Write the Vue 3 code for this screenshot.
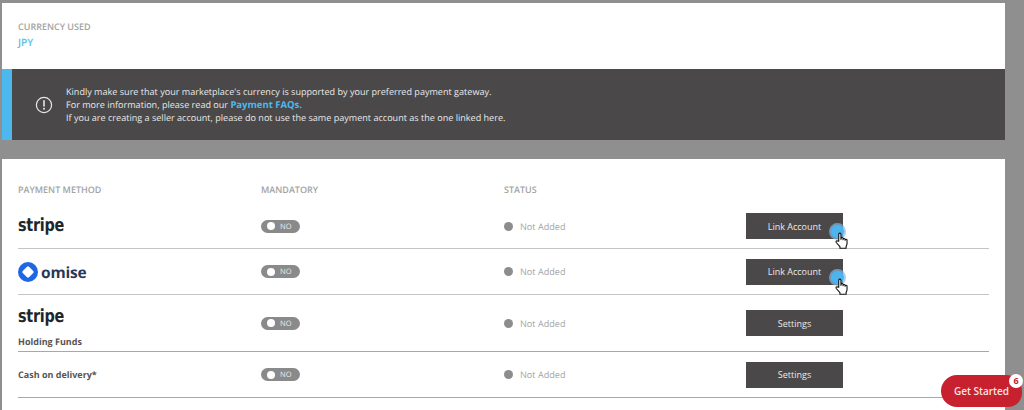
<script setup>
const rows = [
  { id: 1, kind: 'stripe', action: 'Link Account', cursor: true },
  { id: 2, kind: 'omise', action: 'Link Account', cursor: true },
  { id: 3, kind: 'holding', action: 'Settings', cursor: false },
  { id: 4, kind: 'cash', action: 'Settings', cursor: false },
]
</script>

<template>
  <div class="page">
    <section class="card currency">
      <div class="label">CURRENCY USED</div>
      <div class="value">JPY</div>
    </section>
    <section class="alert">
      <svg class="alert-icon" width="18" height="18" viewBox="0 0 18 18">
        <circle cx="9" cy="9" r="7.6" fill="none" stroke="#e8e8e8" stroke-width="1.2" />
        <path d="M9 4.8v5.2" stroke="#e8e8e8" stroke-width="1.6" stroke-linecap="round" />
        <circle cx="9" cy="12.8" r="1" fill="#e8e8e8" />
      </svg>
      <div class="alert-text">
        <div>Kindly make sure that your marketplace's currency is supported by your preferred payment gateway.</div>
        <div>For more information, please read our <a class="faq">Payment FAQs.</a></div>
        <div>If you are creating a seller account, please do not use the same payment account as the one linked here.</div>
      </div>
    </section>
    <section class="card methods">
      <div class="grid head">
        <div>PAYMENT METHOD</div>
        <div>MANDATORY</div>
        <div>STATUS</div>
        <div></div>
      </div>
      <div v-for="r in rows" :key="r.id" class="grid row" :class="'row-' + r.kind">
        <div class="method">
          <span v-if="r.kind === 'stripe' || r.kind === 'holding'" class="stripe">stripe</span>
          <span v-if="r.kind === 'holding'" class="sub">Holding Funds</span>
          <span v-if="r.kind === 'cash'" class="sub">Cash on delivery*</span>
          <span v-if="r.kind === 'omise'" class="omise">
            <svg width="20" height="20" viewBox="0 0 20 20">
              <circle cx="10" cy="10" r="10" fill="#1f66e5" />
              <rect x="5.6" y="5.6" width="8.8" height="8.8" rx="1.4" transform="rotate(45 10 10)" fill="#fff" />
            </svg>
            <span class="omise-text">omise</span>
          </span>
        </div>
        <div>
          <span class="toggle"><i class="knob"></i><span class="no">NO</span></span>
        </div>
        <div class="status"><i class="dot"></i>Not Added</div>
        <div>
          <button class="action">
            {{ r.action }}
            <span v-if="r.cursor" class="pointer">
              <svg width="15" height="17.500" viewBox="0 0 16 19">
                <path d="M5 10V2.400a1.200 1.200 0 0 1 2.400 0V8l.1-1a1.100 1.100 0 0 1 2.200.2V8.400l.1-.7a1.100 1.100 0 0 1 2.100.3v1l.1-.3a1 1 0 0 1 2 .3v3.600c0 1.200-.4 2-1 3v2H6.300v-1.600L2.300 11.400c-.9-1.300.7-2.500 1.700-1.500z" fill="#fff" stroke="#111" stroke-width="1.200" stroke-linejoin="round" />
              </svg>
            </span>
          </button>
        </div>
      </div>
    </section>
    <button class="get-started">Get Started<span class="badge">6</span></button>
  </div>
</template>

<style scoped>
.page {
  position: relative;
  width: 1024px;
  height: 410px;
  overflow: hidden;
  box-sizing: border-box;
  padding: 3px 19px 0 2px;
  background: #8f8f8f;
  font-family: "Open Sans", "Liberation Sans", sans-serif;
  text-rendering: geometricPrecision;
}
.card { background: #fff; }
.currency {
  height: 66px;
  box-sizing: border-box;
  padding: 17px 16px 0;
}
.label {
  font-size: 9px;
  line-height: 13px;
  font-weight: 600;
  color: #a3a3a3;
}
.value {
  margin-top: 2px;
  font-size: 10px;
  line-height: 15px;
  font-weight: 600;
  color: #55bfe8;
}
.alert {
  height: 71px;
  box-sizing: border-box;
  display: flex;
  align-items: center;
  border-left: 10px solid #4db8ee;
  background: #4a4849;
  color: #e9e9e9;
}
.alert-icon { margin-left: 23px; flex: none; }
.alert-text {
  margin-left: 13px;
  font-size: 9.070px;
  line-height: 13px;
  white-space: nowrap;
}
.faq { font-size: 9.500px; font-weight: 700; color: #4db8ee; }
.methods {
  margin-top: 19px;
  height: 260px;
  box-sizing: border-box;
  padding: 24px 16px 0;
}
.grid {
  display: grid;
  grid-template-columns: 243px 243px 242px 243px;
  align-items: center;
}
.head {
  height: 14px;
  margin-bottom: 7px;
  font-size: 9px;
  line-height: 14px;
  font-weight: 600;
  color: #a3a3a3;
}
.row {
  border-bottom: 1px solid #c4c4c4;
  height: 45px;
  box-sizing: content-box;
}
.row-stripe { height: 44px; }
.row-holding { height: 56px; border-bottom-color: #a8a8a8; }
.row-cash { height: 45px; border-bottom-color: #a8a8a8; }
.method { display: flex; flex-direction: column; align-items: flex-start; }
.stripe {
  display: inline-block;
  transform: scaleX(0.8);
  transform-origin: left center;
  font-family: "DejaVu Sans", "Liberation Sans", sans-serif;
  font-size: 18px;
  line-height: 22px;
  font-weight: 700;
  color: #20262c;
  letter-spacing: -0.3px;
}
.row-holding .stripe { margin-top: 7px; }
.sub {
  font-size: 9px;
  line-height: 13px;
  font-weight: 700;
  color: #555;
}
.row-holding .sub { margin-top: 7px; }
.omise { display: flex; align-items: center; gap: 3px; }
.omise-text {
  font-family: "Open Sans", sans-serif;
  font-size: 15.500px;
  line-height: 20px;
  font-weight: 700;
  color: #2a3756;
  letter-spacing: -0.2px;
}
.toggle {
  display: flex;
  align-items: center;
  width: 39px;
  height: 13px;
  border-radius: 7px;
  background: #8a8a8a;
}
.knob {
  width: 8px;
  height: 8px;
  margin-left: 6px;
  border-radius: 50%;
  background: #fff;
}
.no {
  margin-left: 5px;
  padding-top: 2px;
  font-size: 7.500px;
  line-height: 11px;
  color: #ececec;
}
.status {
  display: flex;
  align-items: center;
  font-size: 9.100px;
  color: #a5a5a5;
}
.dot {
  width: 9px;
  height: 9px;
  margin-right: 7px;
  border-radius: 50%;
  background: #8d8d8d;
}
.action {
  position: relative;
  display: block;
  width: 97px;
  height: 26px;
  padding: 0;
  border: 0;
  background: #4a4849;
  color: #eaeaea;
  font-family: inherit;
  font-size: 9px;
  text-align: center;
}
.pointer {
  position: absolute;
  left: 85px;
  top: 12px;
  width: 13px;
  height: 13px;
  border-radius: 50%;
  background: #4db4f0;
  box-shadow: 0 0 0 2px rgba(130, 185, 230, 0.7);
}
.pointer svg { position: absolute; left: 3px; top: 7px; }
.get-started {
  position: absolute;
  left: 941px;
  top: 375px;
  width: 81px;
  height: 32px;
  padding: 0;
  border: 0;
  border-radius: 16px 16px 14px 16px;
  background: #c7202f;
  color: #f5e4e4;
  font-family: inherit;
  font-size: 10px;
  font-weight: 600;
  line-height: 32px;
}
.badge {
  position: absolute;
  right: -1px;
  top: -1px;
  width: 14px;
  height: 14px;
  border-radius: 50%;
  background: #fff;
  color: #c7202f;
  font-size: 9px;
  font-weight: 700;
  line-height: 14px;
  text-align: center;
}
</style>
